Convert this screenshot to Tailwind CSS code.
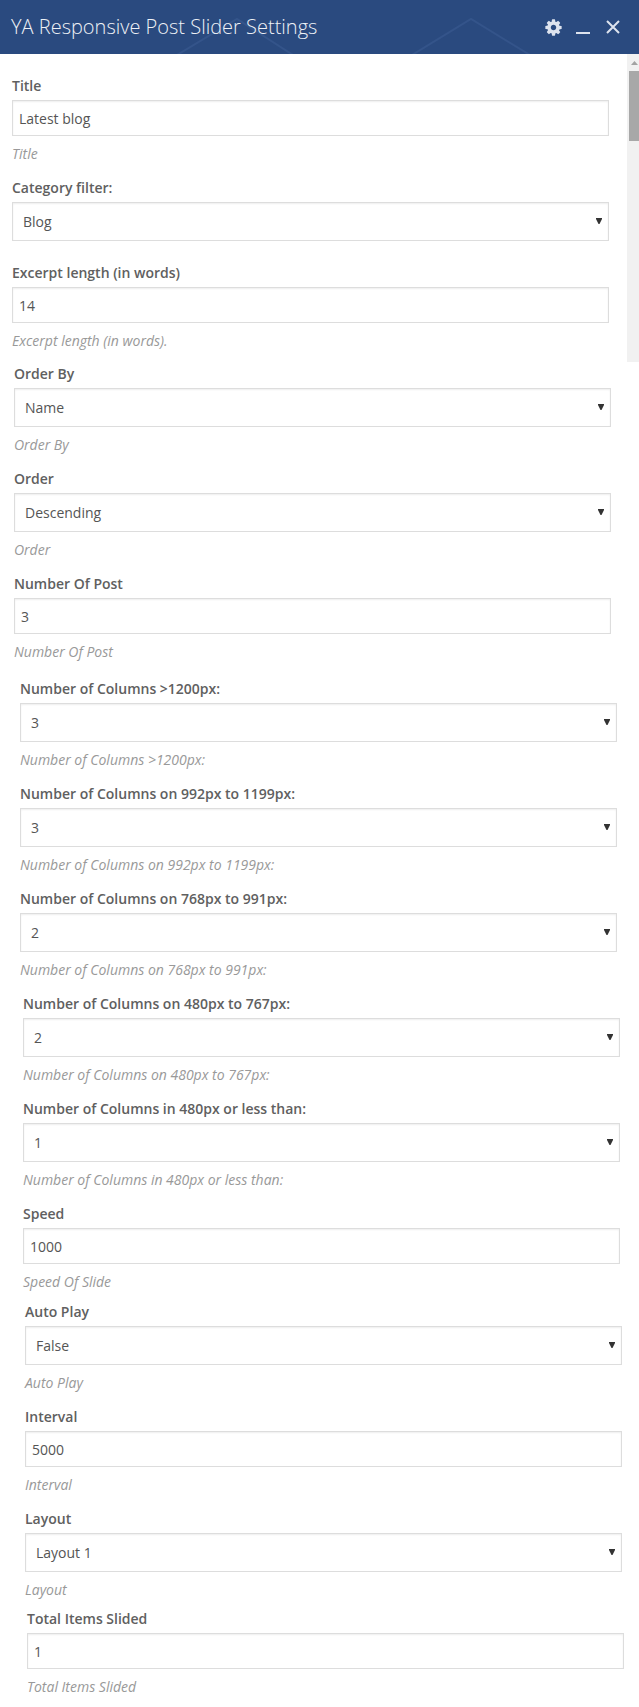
<!DOCTYPE html>
<html lang="en">
<head>
    <meta charset="UTF-8">
    <title>YA Responsive Post Slider Settings</title>
    <script src="https://cdn.jsdelivr.net/npm/@tailwindcss/browser@4"></script>
</head>
<body class="bg-white font-['Open_Sans',sans-serif] overflow-hidden h-[1707px]">
    <header class="relative h-[54px] bg-[#2a4a7f] flex items-center justify-between overflow-hidden">
        <!-- faint chevrons behind the title -->
        <svg class="absolute inset-0" width="639" height="54" fill="none" stroke="#34548a" stroke-width="2">
            <path d="M177 55L237 19L293 55"/>
            <path d="M412 55L471 19L530 55"/>
        </svg>
        <h1 class="relative pl-[11px] text-[20px] leading-[28px] font-light text-[#eef1f6]">YA Responsive Post Slider Settings</h1>
        <div class="relative flex items-center pr-[19px] text-[#dde3ee]">
            <svg class="w-[19px] h-[19px]" viewBox="0 0 1792 1792" fill="currentColor"><path d="M1152 896q0-106-75-181t-181-75-181 75-75 181 75 181 181 75 181-75 75-181zm512-109v222q0 12-8 23t-20 13l-185 28q-19 54-39 91 35 50 107 138 10 12 10 25t-9 23q-27 37-99 108t-94 71q-12 0-26-9l-138-108q-44 23-91 38-16 136-29 186-7 28-36 28h-222q-14 0-24.5-8.5t-11.5-21.5l-28-184q-49-16-90-37l-141 107q-10 9-25 9-14 0-25-11-126-114-165-168-7-10-7-23 0-12 8-23 15-21 51-66.5t54-70.5q-27-50-41-99l-183-27q-13-2-21-12.5t-8-23.5v-222q0-12 8-23t19-13l186-28q14-46 39-92-40-57-107-138-10-12-10-24 0-10 9-23 26-36 98.5-107.5t94.5-71.5q13 0 26 10l138 107q44-23 91-38 16-136 29-186 7-28 36-28h222q14 0 24.5 8.5t11.5 21.5l28 184q49 16 90 37l142-107q9-9 24-9 13 0 25 10 129 119 165 170 7 8 7 22 0 12-8 23-15 21-51 66.5t-54 70.5q26 50 41 98l183 28q13 2 21 12.5t8 23.5z"/></svg>
            <span class="block w-[14px] h-[2px] bg-current ml-[13px] mt-[12px]"></span>
            <svg class="w-[14px] h-[14px] ml-[16px]" viewBox="0 0 14 14" fill="none" stroke="currentColor" stroke-width="2"><path d="M1 1L13 13M13 1L1 13"/></svg>
        </div>
    </header>

    <!-- scrollbar of the settings pane -->
    <div class="absolute left-[627px] top-[54px] w-[12px] h-[308px] bg-[#f1f1f1]">
        <svg class="absolute left-[4px] top-[7px]" width="7" height="4" fill="#a3a3a3"><path d="M3.5 0L7 4H0z"/></svg>
        <div class="absolute left-[2px] top-[17px] w-[10px] h-[70px] bg-[#a8a8a8]"></div>
    </div>

    <main class="pt-[22px] text-[#606060]">
        <section class="ml-[12px]">
            <div class="mb-[14px]">
                <label class="block h-5 mb-1 text-[14px] leading-[19px] font-semibold">Title</label>
                <input value="Latest blog" class="block w-[597px] h-9 px-[6px] border border-[#ddd] shadow-[inset_0_1px_2px_rgba(0,0,0,0.07)] text-[14px] text-[#555] outline-none">
                <p class="h-5 mt-2 text-[14px] leading-[19px] italic text-[#999]">Title</p>
            </div>
            <div class="mb-[22px]">
                <label class="block h-5 mb-1 text-[14px] leading-[19px] font-semibold">Category filter:</label>
                <div class="relative w-[597px]">
                    <select class="block w-full h-[39px] px-[10px] border border-[#ddd] shadow-[inset_0_1px_2px_rgba(0,0,0,0.07)] text-[14px] text-[#555] appearance-none rounded-none outline-none"><option>Blog</option></select>
                    <svg class="absolute right-[7px] top-[16px]" width="6" height="6" fill="#333"><path d="M0 0H6V1L3.5 6H2.5L0 1z"/></svg>
                </div>
            </div>
            <div class="mb-[13px]">
                <label class="block h-5 mb-1 text-[14px] leading-[19px] font-semibold">Excerpt length (in words)</label>
                <input value="14" class="block w-[597px] h-9 px-[6px] border border-[#ddd] shadow-[inset_0_1px_2px_rgba(0,0,0,0.07)] text-[14px] text-[#555] outline-none">
                <p class="h-5 mt-2 text-[14px] leading-[19px] italic text-[#999]">Excerpt length (in words).</p>
            </div>
        </section>

        <section class="ml-[14px]">
            <div class="mb-[14px]">
                <label class="block h-5 mb-1 text-[14px] leading-[19px] font-semibold">Order By</label>
                <div class="relative w-[597px]">
                    <select class="block w-full h-[39px] px-[10px] border border-[#ddd] shadow-[inset_0_1px_2px_rgba(0,0,0,0.07)] text-[14px] text-[#555] appearance-none rounded-none outline-none"><option>Name</option></select>
                    <svg class="absolute right-[7px] top-[16px]" width="6" height="6" fill="#333"><path d="M0 0H6V1L3.5 6H2.5L0 1z"/></svg>
                </div>
                <p class="h-5 mt-2 text-[14px] leading-[19px] italic text-[#999]">Order By</p>
            </div>
            <div class="mb-[14px]">
                <label class="block h-5 mb-1 text-[14px] leading-[19px] font-semibold">Order</label>
                <div class="relative w-[597px]">
                    <select class="block w-full h-[39px] px-[10px] border border-[#ddd] shadow-[inset_0_1px_2px_rgba(0,0,0,0.07)] text-[14px] text-[#555] appearance-none rounded-none outline-none"><option>Descending</option></select>
                    <svg class="absolute right-[7px] top-[16px]" width="6" height="6" fill="#333"><path d="M0 0H6V1L3.5 6H2.5L0 1z"/></svg>
                </div>
                <p class="h-5 mt-2 text-[14px] leading-[19px] italic text-[#999]">Order</p>
            </div>
            <div class="mb-[17px]">
                <label class="block h-5 mb-1 text-[14px] leading-[19px] font-semibold">Number Of Post</label>
                <input value="3" class="block w-[597px] h-9 px-[6px] border border-[#ddd] shadow-[inset_0_1px_2px_rgba(0,0,0,0.07)] text-[14px] text-[#555] outline-none">
                <p class="h-5 mt-2 text-[14px] leading-[19px] italic text-[#999]">Number Of Post</p>
            </div>
        </section>

        <section class="ml-[20px]">
            <div class="mb-[14px]">
                <label class="block h-5 mb-1 text-[14px] leading-[19px] font-semibold">Number of Columns &gt;1200px:</label>
                <div class="relative w-[597px]">
                    <select class="block w-full h-[39px] px-[10px] border border-[#ddd] shadow-[inset_0_1px_2px_rgba(0,0,0,0.07)] text-[14px] text-[#555] appearance-none rounded-none outline-none"><option>3</option></select>
                    <svg class="absolute right-[7px] top-[16px]" width="6" height="6" fill="#333"><path d="M0 0H6V1L3.5 6H2.5L0 1z"/></svg>
                </div>
                <p class="h-5 mt-2 text-[14px] leading-[19px] italic text-[#999]">Number of Columns &gt;1200px:</p>
            </div>
            <div class="mb-[14px]">
                <label class="block h-5 mb-1 text-[14px] leading-[19px] font-semibold">Number of Columns on 992px to 1199px:</label>
                <div class="relative w-[597px]">
                    <select class="block w-full h-[39px] px-[10px] border border-[#ddd] shadow-[inset_0_1px_2px_rgba(0,0,0,0.07)] text-[14px] text-[#555] appearance-none rounded-none outline-none"><option>3</option></select>
                    <svg class="absolute right-[7px] top-[16px]" width="6" height="6" fill="#333"><path d="M0 0H6V1L3.5 6H2.5L0 1z"/></svg>
                </div>
                <p class="h-5 mt-2 text-[14px] leading-[19px] italic text-[#999]">Number of Columns on 992px to 1199px:</p>
            </div>
            <div class="mb-[14px]">
                <label class="block h-5 mb-1 text-[14px] leading-[19px] font-semibold">Number of Columns on 768px to 991px:</label>
                <div class="relative w-[597px]">
                    <select class="block w-full h-[39px] px-[10px] border border-[#ddd] shadow-[inset_0_1px_2px_rgba(0,0,0,0.07)] text-[14px] text-[#555] appearance-none rounded-none outline-none"><option>2</option></select>
                    <svg class="absolute right-[7px] top-[16px]" width="6" height="6" fill="#333"><path d="M0 0H6V1L3.5 6H2.5L0 1z"/></svg>
                </div>
                <p class="h-5 mt-2 text-[14px] leading-[19px] italic text-[#999]">Number of Columns on 768px to 991px:</p>
            </div>
        </section>

        <section class="ml-[23px]">
            <div class="mb-[14px]">
                <label class="block h-5 mb-1 text-[14px] leading-[19px] font-semibold">Number of Columns on 480px to 767px:</label>
                <div class="relative w-[597px]">
                    <select class="block w-full h-[39px] px-[10px] border border-[#ddd] shadow-[inset_0_1px_2px_rgba(0,0,0,0.07)] text-[14px] text-[#555] appearance-none rounded-none outline-none"><option>2</option></select>
                    <svg class="absolute right-[7px] top-[16px]" width="6" height="6" fill="#333"><path d="M0 0H6V1L3.5 6H2.5L0 1z"/></svg>
                </div>
                <p class="h-5 mt-2 text-[14px] leading-[19px] italic text-[#999]">Number of Columns on 480px to 767px:</p>
            </div>
            <div class="mb-[14px]">
                <label class="block h-5 mb-1 text-[14px] leading-[19px] font-semibold">Number of Columns in 480px or less than:</label>
                <div class="relative w-[597px]">
                    <select class="block w-full h-[39px] px-[10px] border border-[#ddd] shadow-[inset_0_1px_2px_rgba(0,0,0,0.07)] text-[14px] text-[#555] appearance-none rounded-none outline-none"><option>1</option></select>
                    <svg class="absolute right-[7px] top-[16px]" width="6" height="6" fill="#333"><path d="M0 0H6V1L3.5 6H2.5L0 1z"/></svg>
                </div>
                <p class="h-5 mt-2 text-[14px] leading-[19px] italic text-[#999]">Number of Columns in 480px or less than:</p>
            </div>
            <div class="mb-[10px]">
                <label class="block h-5 mb-1 text-[14px] leading-[19px] font-semibold">Speed</label>
                <input value="1000" class="block w-[597px] h-9 px-[6px] border border-[#ddd] shadow-[inset_0_1px_2px_rgba(0,0,0,0.07)] text-[14px] text-[#555] outline-none">
                <p class="h-5 mt-2 text-[14px] leading-[19px] italic text-[#999]">Speed Of Slide</p>
            </div>
        </section>

        <section class="ml-[25px]">
            <div class="mb-[14px]">
                <label class="block h-5 mb-1 text-[14px] leading-[19px] font-semibold">Auto Play</label>
                <div class="relative w-[597px]">
                    <select class="block w-full h-[39px] px-[10px] border border-[#ddd] shadow-[inset_0_1px_2px_rgba(0,0,0,0.07)] text-[14px] text-[#555] appearance-none rounded-none outline-none"><option>False</option></select>
                    <svg class="absolute right-[7px] top-[16px]" width="6" height="6" fill="#333"><path d="M0 0H6V1L3.5 6H2.5L0 1z"/></svg>
                </div>
                <p class="h-5 mt-2 text-[14px] leading-[19px] italic text-[#999]">Auto Play</p>
            </div>
            <div class="mb-[14px]">
                <label class="block h-5 mb-1 text-[14px] leading-[19px] font-semibold">Interval</label>
                <input value="5000" class="block w-[597px] h-9 px-[6px] border border-[#ddd] shadow-[inset_0_1px_2px_rgba(0,0,0,0.07)] text-[14px] text-[#555] outline-none">
                <p class="h-5 mt-2 text-[14px] leading-[19px] italic text-[#999]">Interval</p>
            </div>
            <div class="mb-[9px]">
                <label class="block h-5 mb-1 text-[14px] leading-[19px] font-semibold">Layout</label>
                <div class="relative w-[597px]">
                    <select class="block w-full h-[39px] px-[10px] border border-[#ddd] shadow-[inset_0_1px_2px_rgba(0,0,0,0.07)] text-[14px] text-[#555] appearance-none rounded-none outline-none"><option>Layout 1</option></select>
                    <svg class="absolute right-[7px] top-[16px]" width="6" height="6" fill="#333"><path d="M0 0H6V1L3.5 6H2.5L0 1z"/></svg>
                </div>
                <p class="h-5 mt-2 text-[14px] leading-[19px] italic text-[#999]">Layout</p>
            </div>
        </section>

        <section class="ml-[27px]">
            <div>
                <label class="block h-5 mb-1 text-[14px] leading-[19px] font-semibold">Total Items Slided</label>
                <input value="1" class="block w-[597px] h-9 px-[6px] border border-[#ddd] shadow-[inset_0_1px_2px_rgba(0,0,0,0.07)] text-[14px] text-[#555] outline-none">
                <p class="h-5 mt-2 text-[14px] leading-[19px] italic text-[#999]">Total Items Slided</p>
            </div>
        </section>
    </main>
</body>
</html>
